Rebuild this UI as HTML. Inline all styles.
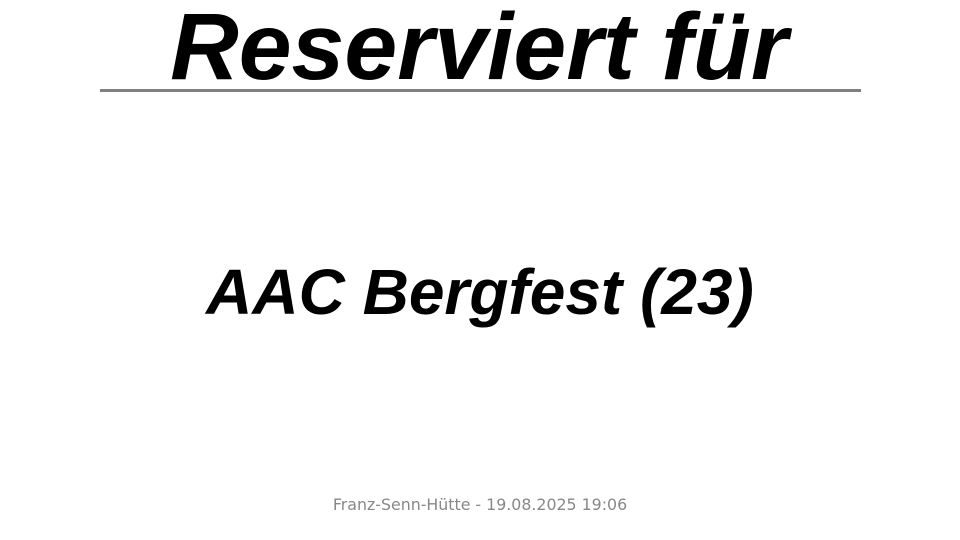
<!DOCTYPE html>
<html><head><meta charset="utf-8"><style>
html,body{margin:0;padding:0;background:#fff;width:960px;height:540px;overflow:hidden;position:relative}
.t{position:absolute;left:0;width:960px;text-align:center;font-family:"Liberation Sans",sans-serif;font-weight:bold;font-style:italic;color:#000;white-space:nowrap}
#h{top:-3px;font-size:95px;line-height:100px;left:-1px}
#line{position:absolute;left:100px;top:89px;width:761px;height:3px;background:#808080}
#m{top:255px;font-size:64px;line-height:74px}
#f{position:absolute;left:0;width:960px;text-align:center;top:495px;font-family:"DejaVu Sans",sans-serif;font-size:15.8px;color:#888;line-height:20px}
</style></head><body>
<div class="t" id="h">Reserviert für</div>
<div id="line"></div>
<div class="t" id="m">AAC Bergfest (23)</div>
<div id="f">Franz-Senn-Hütte - 19.08.2025 19:06</div>
</body></html>
